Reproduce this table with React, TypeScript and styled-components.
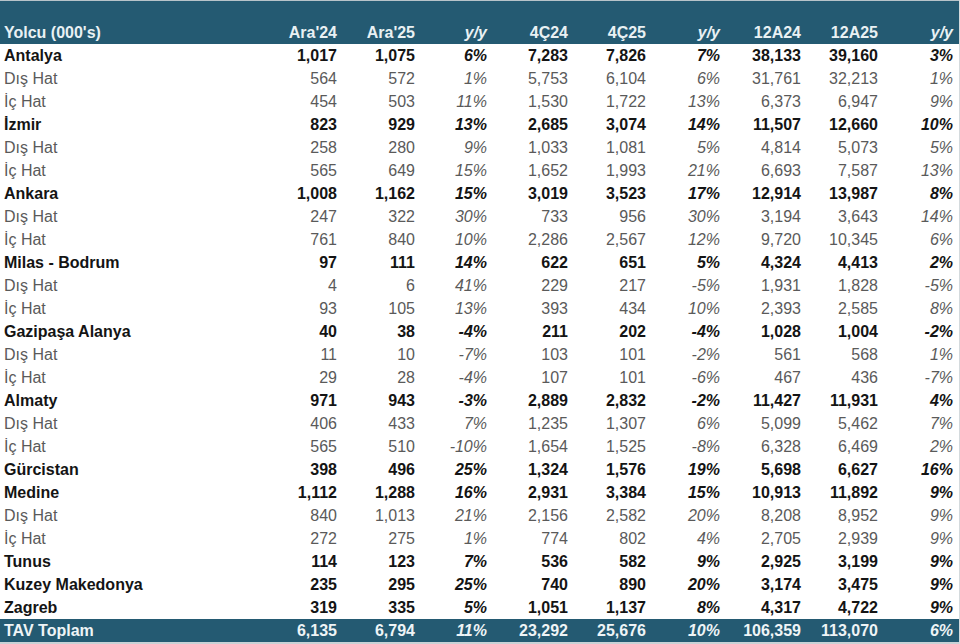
import React from "react";
import styled, { createGlobalStyle } from "styled-components";

const GlobalStyle = createGlobalStyle`
  html, body {
    margin: 0;
    padding: 0;
    background: #ffffff;
  }

  body {
    font-family: "Liberation Sans", Arial, sans-serif;
    font-size: 16px;
  }
`;

const COLUMNS = "259px 78px 78px 72px 81px 78px 74px 81px 77px 75px";

type Kind = "main" | "sub";

type Line = {
  label: string;
  kind: Kind;
  values: string[];
};

const columns = ["Ara'24", "Ara'25", "y/y", "4Ç24", "4Ç25", "y/y", "12A24", "12A25", "y/y"];

const rows: Line[] = [
  { label: "Antalya", kind: "main", values: ["1,017", "1,075", "6%", "7,283", "7,826", "7%", "38,133", "39,160", "3%"] },
  { label: "Dış Hat", kind: "sub", values: ["564", "572", "1%", "5,753", "6,104", "6%", "31,761", "32,213", "1%"] },
  { label: "İç Hat", kind: "sub", values: ["454", "503", "11%", "1,530", "1,722", "13%", "6,373", "6,947", "9%"] },
  { label: "İzmir", kind: "main", values: ["823", "929", "13%", "2,685", "3,074", "14%", "11,507", "12,660", "10%"] },
  { label: "Dış Hat", kind: "sub", values: ["258", "280", "9%", "1,033", "1,081", "5%", "4,814", "5,073", "5%"] },
  { label: "İç Hat", kind: "sub", values: ["565", "649", "15%", "1,652", "1,993", "21%", "6,693", "7,587", "13%"] },
  { label: "Ankara", kind: "main", values: ["1,008", "1,162", "15%", "3,019", "3,523", "17%", "12,914", "13,987", "8%"] },
  { label: "Dış Hat", kind: "sub", values: ["247", "322", "30%", "733", "956", "30%", "3,194", "3,643", "14%"] },
  { label: "İç Hat", kind: "sub", values: ["761", "840", "10%", "2,286", "2,567", "12%", "9,720", "10,345", "6%"] },
  { label: "Milas - Bodrum", kind: "main", values: ["97", "111", "14%", "622", "651", "5%", "4,324", "4,413", "2%"] },
  { label: "Dış Hat", kind: "sub", values: ["4", "6", "41%", "229", "217", "-5%", "1,931", "1,828", "-5%"] },
  { label: "İç Hat", kind: "sub", values: ["93", "105", "13%", "393", "434", "10%", "2,393", "2,585", "8%"] },
  { label: "Gazipaşa Alanya", kind: "main", values: ["40", "38", "-4%", "211", "202", "-4%", "1,028", "1,004", "-2%"] },
  { label: "Dış Hat", kind: "sub", values: ["11", "10", "-7%", "103", "101", "-2%", "561", "568", "1%"] },
  { label: "İç Hat", kind: "sub", values: ["29", "28", "-4%", "107", "101", "-6%", "467", "436", "-7%"] },
  { label: "Almaty", kind: "main", values: ["971", "943", "-3%", "2,889", "2,832", "-2%", "11,427", "11,931", "4%"] },
  { label: "Dış Hat", kind: "sub", values: ["406", "433", "7%", "1,235", "1,307", "6%", "5,099", "5,462", "7%"] },
  { label: "İç Hat", kind: "sub", values: ["565", "510", "-10%", "1,654", "1,525", "-8%", "6,328", "6,469", "2%"] },
  { label: "Gürcistan", kind: "main", values: ["398", "496", "25%", "1,324", "1,576", "19%", "5,698", "6,627", "16%"] },
  { label: "Medine", kind: "main", values: ["1,112", "1,288", "16%", "2,931", "3,384", "15%", "10,913", "11,892", "9%"] },
  { label: "Dış Hat", kind: "sub", values: ["840", "1,013", "21%", "2,156", "2,582", "20%", "8,208", "8,952", "9%"] },
  { label: "İç Hat", kind: "sub", values: ["272", "275", "1%", "774", "802", "4%", "2,705", "2,939", "9%"] },
  { label: "Tunus", kind: "main", values: ["114", "123", "7%", "536", "582", "9%", "2,925", "3,199", "9%"] },
  { label: "Kuzey Makedonya", kind: "main", values: ["235", "295", "25%", "740", "890", "20%", "3,174", "3,475", "9%"] },
  { label: "Zagreb", kind: "main", values: ["319", "335", "5%", "1,051", "1,137", "8%", "4,317", "4,722", "9%"] },
];

const total = ["6,135", "6,794", "11%", "23,292", "25,676", "10%", "106,359", "113,070", "6%"];

const isChange = (i: number) => i % 3 === 2;

const Table = styled.div`
  width: 960px;
  display: flex;
  flex-direction: column;
  border-right: 1px solid #d4dadd;
  box-sizing: border-box;
`;

const HeaderRow = styled.div`
  display: grid;
  grid-template-columns: ${COLUMNS};
  align-items: end;
  height: 44px;
  box-sizing: border-box;
  padding-bottom: 2px;
  background: #245a72;
  border-top: 1px solid #b7c3c9;
  color: #e9f1f4;
  font-weight: bold;
  line-height: 19px;
`;

const Row = styled.div<{ $kind: Kind }>`
  display: grid;
  grid-template-columns: ${COLUMNS};
  height: 23px;
  line-height: 23px;
  color: ${(p) => (p.$kind === "main" ? "#141414" : "#5a5a5a")};
  font-weight: ${(p) => (p.$kind === "main" ? "bold" : "normal")};
`;

const TotalRow = styled.div`
  display: grid;
  grid-template-columns: ${COLUMNS};
  height: 23px;
  line-height: 23px;
  background: #245a72;
  color: #eef4f6;
  font-weight: bold;
  border-bottom: 2px solid #c9d2d6;
`;

const Label = styled.div`
  padding-left: 4px;
  white-space: nowrap;
`;

const Num = styled.div<{ $italic?: boolean }>`
  text-align: right;
  white-space: nowrap;
  font-style: ${(p) => (p.$italic ? "italic" : "normal")};
`;

export default function App() {
  return (
    <>
      <GlobalStyle />
      <Table>
        <HeaderRow>
          <Label>Yolcu (000's)</Label>
          {columns.map((c, i) => (
            <Num key={i} $italic={isChange(i)}>
              {c}
            </Num>
          ))}
        </HeaderRow>
        {rows.map((r, ri) => (
          <Row key={ri} $kind={r.kind}>
            <Label>{r.label}</Label>
            {r.values.map((v, i) => (
              <Num key={i} $italic={isChange(i)}>
                {v}
              </Num>
            ))}
          </Row>
        ))}
        <TotalRow>
          <Label>TAV Toplam</Label>
          {total.map((v, i) => (
            <Num key={i} $italic={isChange(i)}>
              {v}
            </Num>
          ))}
        </TotalRow>
      </Table>
    </>
  );
}
